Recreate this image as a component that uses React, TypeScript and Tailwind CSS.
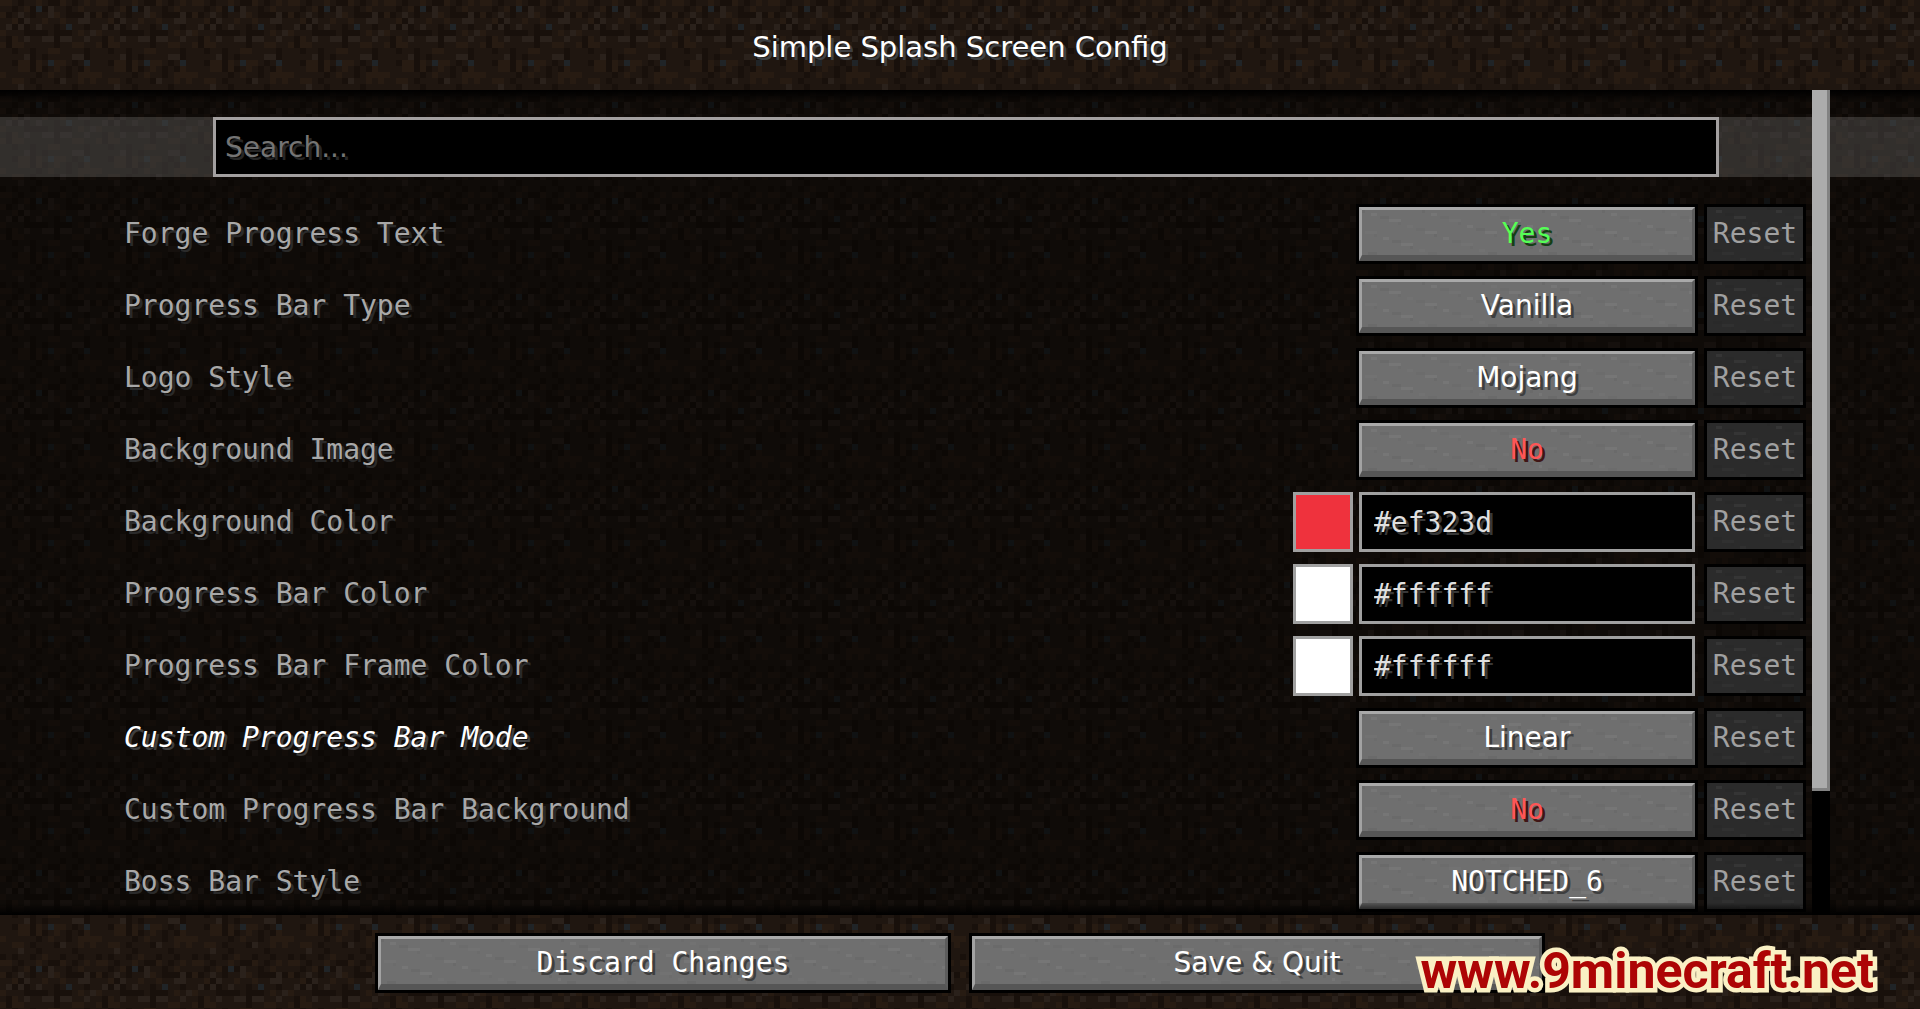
import React from 'react';
import clsx from 'clsx';

type Entry = {
  id: string;
  label: string;
  value: string;
  kind: 'toggle' | 'enum' | 'color';
  edited?: boolean;
  mono?: boolean;
};

const SANS = "font-['DejaVu_Sans',sans-serif]";
const MONO = "font-['DejaVu_Sans_Mono',monospace]";

const ENTRIES: Entry[] = [
  { id: 'forge-text', label: 'Forge Progress Text', value: 'Yes', kind: 'toggle', mono: true },
  { id: 'bar-type', label: 'Progress Bar Type', value: 'Vanilla', kind: 'enum' },
  { id: 'logo-style', label: 'Logo Style', value: 'Mojang', kind: 'enum' },
  { id: 'bg-image', label: 'Background Image', value: 'No', kind: 'toggle', mono: true },
  { id: 'bg-color', label: 'Background Color', value: '#ef323d', kind: 'color' },
  { id: 'bar-color', label: 'Progress Bar Color', value: '#ffffff', kind: 'color' },
  { id: 'frame-color', label: 'Progress Bar Frame Color', value: '#ffffff', kind: 'color' },
  { id: 'bar-mode', label: 'Custom Progress Bar Mode', value: 'Linear', kind: 'enum', edited: true },
  { id: 'bar-bg', label: 'Custom Progress Bar Background', value: 'No', kind: 'toggle', mono: true },
  { id: 'boss-bar', label: 'Boss Bar Style', value: 'NOTCHED_6', kind: 'enum', mono: true },
];

// 16x16 dirt tile, one letter per texel
const DIRT = [
  'll.d..l.ddl.d.l.',
  '..d.ldbdp..d.l..',
  'ld.p.d..pl.dddpd',
  '..ldp..l..l..pp.',
  '.pdpd.p..d.b..d.',
  'l...dddd.ddd.l.p',
  '.dl.p..ppdpp..p.',
  'ldll.....d..ll..',
  '..d..d..ll....d.',
  '....pd.d....ppd.',
  '..dlldl.bll.d.b.',
  '...lldld.l.d.dl.',
  'l.....d.l..d.lll',
  '..ll.d...dp..l.l',
  '...p..d.....d...',
  'd.d..d.l..d..d..',
];

const DIRT_COLORS: Record<string, string> = {
  l: '#271b12',
  d: '#18100b',
  p: '#2a211b',
  b: '#202427',
};

const DirtBackground = () => (
  <svg className="absolute inset-0 h-full w-full" aria-hidden="true" shapeRendering="crispEdges">
    <defs>
      <pattern id="dirt" width="96" height="96" patternUnits="userSpaceOnUse">
        <rect width="96" height="96" fill="#1f1610" />
        {DIRT.map((line, y) =>
          line.split('').map((texel, x) =>
            texel === '.' ? null : (
              <rect key={`${x}-${y}`} x={x * 6} y={y * 6} width="6" height="6" fill={DIRT_COLORS[texel]} />
            )
          )
        )}
      </pattern>
      <pattern id="stone" width="180" height="60" patternUnits="userSpaceOnUse">
        {Array.from({ length: 90 }, (_, i) => (
          <rect
            key={i}
            x={((i * 67) % 60) * 3}
            y={((i * 29) % 20) * 3}
            width={3 + (i % 4) * 3}
            height="3"
            fill={i % 2 ? '#ffffff' : '#000000'}
            opacity="0.025"
          />
        ))}
      </pattern>
    </defs>
    <rect width="100%" height="100%" fill="url(#dirt)" />
  </svg>
);

const StoneTexture = () => (
  <svg className="absolute inset-0 h-full w-full" aria-hidden="true" shapeRendering="crispEdges">
    <rect width="100%" height="100%" fill="url(#stone)" />
  </svg>
);

type StoneButtonProps = {
  id?: string;
  className?: string;
  children: React.ReactNode;
};

const StoneButton = ({ id, className, children }: StoneButtonProps) => (
  <button id={id} type="button" className={clsx('h-[60px] border-3 border-black', className)}>
    <span className="relative flex h-full items-center justify-center border-3 border-b-6 border-t-[#a9a9a9] border-r-[#5c5c5c] border-b-[#565656] border-l-[#a2a2a2] bg-[#6f6f6f] pt-[2px]">
      <StoneTexture />
      <span className="relative">{children}</span>
    </span>
  </button>
);

const ResetButton = ({ label }: { label: string }) => (
  <button
    type="button"
    disabled
    aria-label={`Reset ${label}`}
    className={clsx('relative h-[60px] w-[102px] border-3 border-black bg-[#2b2b2b] text-[#a0a0a0]', MONO)}
  >
    <StoneTexture />
    <span className="relative">Reset</span>
  </button>
);

const EntryControl = ({ entry }: { entry: Entry }) => {
  if (entry.kind === 'color') {
    return (
      <div className="flex gap-[6px] pr-[3px]">
        <button
          type="button"
          aria-label={`Pick ${entry.label}`}
          className="size-[60px] border-3 border-[#a0a0a0]"
          style={{ backgroundColor: entry.value }}
        />
        <input
          id={entry.id}
          defaultValue={entry.value}
          className={clsx(
            'h-[60px] w-[336px] border-3 border-[#a0a0a0] bg-black px-3 text-[#e0e0e0] outline-none text-shadow-[3px_3px_0_#383838]',
            MONO
          )}
        />
      </div>
    );
  }

  const isYes = entry.value === 'Yes';
  return (
    <StoneButton
      id={entry.id}
      className={clsx(
        'w-[342px]',
        entry.mono ? MONO : SANS,
        entry.kind === 'enum' && 'text-white text-shadow-[3px_3px_0_#3e3e3e]',
        entry.kind === 'toggle' && isYes && 'text-[#55ff55] text-shadow-[3px_3px_0_#153f15]',
        entry.kind === 'toggle' && !isYes && 'text-[#ff5555] text-shadow-[3px_3px_0_#3f1515]'
      )}
    >
      {entry.value}
    </StoneButton>
  );
};

const EntryRow = ({ entry }: { entry: Entry }) => (
  <li className="flex items-center">
    <label
      htmlFor={entry.id}
      className={clsx(
        'flex-1',
        MONO,
        entry.edited
          ? 'italic text-white text-shadow-[3px_3px_0_#3e3e3e]'
          : 'text-[#a8a8a8] text-shadow-[3px_3px_0_#2a2a2a]'
      )}
    >
      {entry.label}
    </label>
    <div className="flex gap-[6px]">
      <EntryControl entry={entry} />
      <ResetButton label={entry.label} />
    </div>
  </li>
);

const App: React.FC = () => (
  <div className="relative flex h-screen flex-col overflow-hidden bg-[#1f1610] text-[28px] leading-[36px]">
    <DirtBackground />

    <header className="relative flex h-[90px] items-center justify-center pt-1">
      <h1 className={clsx('text-[29px] text-white text-shadow-[3px_3px_0_#3e4042]', SANS)}>
        Simple Splash Screen Config
      </h1>
    </header>

    <main className="relative min-h-0 flex-1 overflow-hidden bg-black/50 pt-[27px]">
      <div className="bg-white/15 pr-[201px] pl-[213px]">
        <input
          type="text"
          aria-label="Search"
          placeholder="Search..."
          className={clsx(
            'block h-[60px] w-full border-3 border-[#a3a0a0] bg-black px-[9px] text-white outline-none placeholder:text-[#747474] text-shadow-[3px_3px_0_#262626]',
            SANS
          )}
        />
      </div>

      <ul className="mt-[27px] flex flex-col gap-3 pr-[114px] pl-[124px]">
        {ENTRIES.map((entry) => (
          <EntryRow key={entry.id} entry={entry} />
        ))}
      </ul>

      {/* Edge shadows */}
      <div className="pointer-events-none absolute inset-x-0 top-0 h-3 bg-linear-to-b from-black to-transparent" />
      <div className="pointer-events-none absolute inset-x-0 bottom-0 h-3 bg-linear-to-t from-black to-transparent" />

      {/* Scrollbar */}
      <div className="absolute inset-y-0 right-[90px] w-[18px] bg-black">
        <div className="h-[85%] border-r-3 border-b-3 border-[#828282] bg-[#acacac]" />
      </div>
    </main>

    <footer className="relative flex justify-center gap-[18px] px-4 pt-[18px] pb-4">
      <StoneButton className={clsx('w-[576px] text-white text-shadow-[3px_3px_0_#3e3e3e]', MONO)}>
        Discard Changes
      </StoneButton>
      <StoneButton className={clsx('w-[576px] text-white text-shadow-[3px_3px_0_#3e3e3e]', SANS)}>
        Save &amp; Quit
      </StoneButton>
      <a
        href="#"
        className="absolute right-[46px] bottom-[6px] font-['Roboto',sans-serif] text-[50px] leading-[64px] font-bold text-[#ad0505] [-webkit-text-stroke:9px_#faf0c4] [paint-order:stroke_fill]"
      >
        www.9minecraft.net
      </a>
    </footer>
  </div>
);

export default App;
